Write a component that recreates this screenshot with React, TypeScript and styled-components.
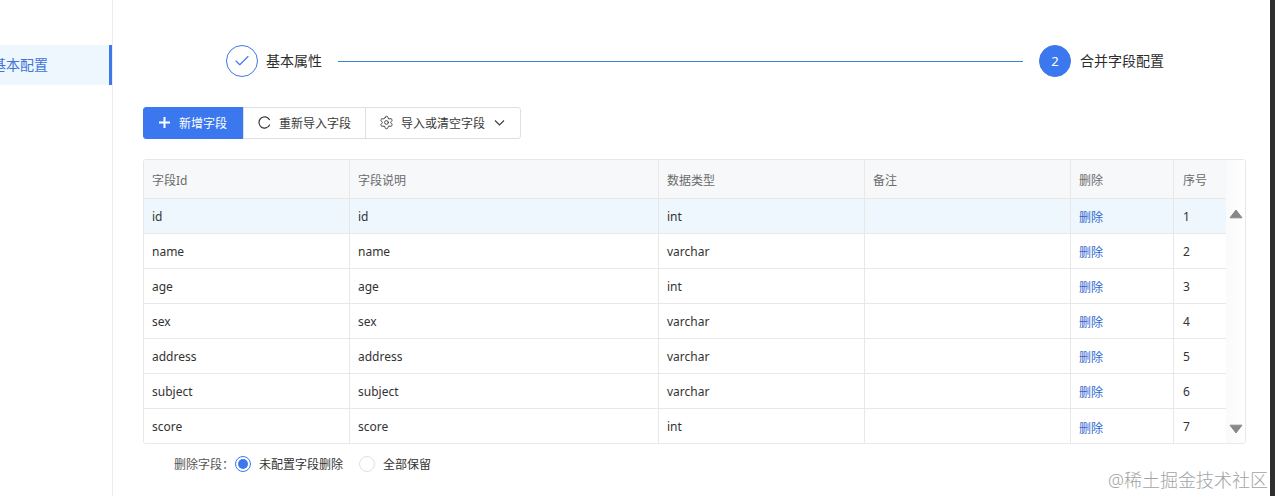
import React from "react";
import styled, { createGlobalStyle } from "styled-components";
import { Check, Settings } from "lucide-react";

const GlobalStyle = createGlobalStyle`
  html, body {
    margin: 0;
    padding: 0;
    background: #fff;
  }
  body {
    font-family: "Noto Sans", "Noto Sans CJK SC", sans-serif;
    font-size: 12px;
    color: #333;
  }
`;

// Page frame
const Page = styled.div`
  position: relative;
  display: flex;
  width: 1275px;
  height: 496px;
  overflow: hidden;
`;

const Sidebar = styled.aside`
  flex: none;
  width: 113px;
  padding-top: 45px;
  box-sizing: border-box;
  border-right: 1px solid #ececec;
  overflow: hidden;
`;

const MenuItem = styled.div`
  display: flex;
  justify-content: flex-end;
  align-items: center;
  height: 40px;
  padding: 0 61px 2px 0;
  box-sizing: border-box;
  background: #eef6fe;
  border-right: 3px solid #3f78e6;
  color: #3d75d8;
  font-size: 14px;
  white-space: nowrap;
`;

const Main = styled.main`
  flex: none;
  width: 1103px;
  padding: 45px 0 0 30px;
`;

const RightEdge = styled.div`
  flex: none;
  width: 5px;
  margin-left: auto;
  background: #2f2f2f;
`;

// Steps
const Steps = styled.div`
  display: flex;
  align-items: center;
  height: 32px;
  padding: 0 82px 0 83px;
`;

const Circle = styled.div<{ $done?: boolean }>`
  flex: none;
  display: flex;
  align-items: center;
  justify-content: center;
  box-sizing: border-box;
  width: 32px;
  height: 32px;
  border-radius: 50%;
  border: 1px solid #3f78e6;
  background: ${(p) => (p.$done ? "#fff" : "#3b78ef")};
  color: ${(p) => (p.$done ? "#3f78e6" : "#fff")};
  font-size: 13px;
`;

const StepLabel = styled.span<{ $gap: number }>`
  flex: none;
  margin: 0 0 2px ${(p) => p.$gap}px;
  font-size: 14px;
  color: #2c2c2c;
`;

const StepLine = styled.div`
  flex: 1;
  height: 1px;
  margin: 0 16px;
  background: #3a82d0;
`;

// Toolbar
const Toolbar = styled.div`
  display: flex;
  height: 32px;
  margin-top: 30px;
`;

const ToolButton = styled.button<{ $primary?: boolean; $width: number }>`
  display: flex;
  align-items: center;
  justify-content: center;
  gap: 8px;
  box-sizing: border-box;
  width: ${(p) => p.$width}px;
  height: 32px;
  padding: ${(p) => (p.$primary ? "0 2px 1px 0" : "0 0 1px")};
  margin-left: -1px;
  border: 1px solid ${(p) => (p.$primary ? "#3b78ef" : "#dcdfe6")};
  background: ${(p) => (p.$primary ? "#3b78ef" : "#fff")};
  color: ${(p) => (p.$primary ? "#fff" : "#3a3a3a")};
  font-family: inherit;
  font-size: 12px;

  &:first-child {
    margin-left: 0;
    border-radius: 3px 0 0 3px;
  }
  &:last-child {
    border-radius: 0 3px 3px 0;
  }
`;

const GearIcon = styled(Settings)`
  margin: 0 -1px;
  color: #2f2f2f;
`;

// Table
const TableFrame = styled.div`
  display: flex;
  width: 1103px;
  height: 285px;
  box-sizing: border-box;
  margin-top: 20px;
  border: 1px solid #e8e8e8;
  border-radius: 3px;
  overflow: hidden;
`;

const Grid = styled.div`
  flex: none;
  width: 1082px;
`;

const Row = styled.div<{ $head?: boolean; $active?: boolean }>`
  display: grid;
  grid-template-columns: 206px 309px 206px 206px 103px 52px;
  height: ${(p) => (p.$head ? 39 : 35)}px;
  box-sizing: border-box;
  border-bottom: 1px solid #e8e8e8;
  background: ${(p) => (p.$head ? "#f7f8fa" : p.$active ? "#eef6fe" : "#fff")};
  color: ${(p) => (p.$head ? "#6b6b6b" : "#333")};

  &:last-child {
    border-bottom: 0;
  }
`;

const Cell = styled.div<{ $head?: boolean }>`
  display: flex;
  align-items: center;
  box-sizing: border-box;
  padding-left: 8px;
  padding-top: ${(p) => (p.$head ? 1 : 0)}px;
  border-right: 1px solid #e8e8e8;
  font-size: 12px;
  white-space: nowrap;

  &:last-child {
    border-right: 0;
    padding-left: 9px;
  }
`;

const DeleteLink = styled.a`
  padding-top: 2px;
  color: #2f66d0;
`;

const ScrollTrack = styled.div`
  flex: 1;
  display: flex;
  flex-direction: column;
  justify-content: space-between;
  align-items: center;
  padding: 49px 0 9px;
  background: linear-gradient(to right, #fafafa, #fff);
`;

// Radio row
const RadioRow = styled.div`
  display: flex;
  align-items: center;
  height: 18px;
  margin: 11px 0 0 31px;
  font-size: 12px;
  color: #333;
`;

const RadioTitle = styled.span`
  margin-right: 1px;
  color: #555;
`;

const RadioDot = styled.span<{ $checked?: boolean }>`
  flex: none;
  display: flex;
  align-items: center;
  justify-content: center;
  box-sizing: border-box;
  width: 16px;
  height: 16px;
  border-radius: 50%;
  border: 1px solid ${(p) => (p.$checked ? "#3b78ef" : "#dcdfe6")};
  background: #fff;

  &::after {
    content: "";
    display: ${(p) => (p.$checked ? "block" : "none")};
    width: 10px;
    height: 10px;
    border-radius: 50%;
    background: #3b78ef;
  }
`;

const RadioLabel = styled.span<{ $gap: number }>`
  margin-left: 8px;
  margin-right: ${(p) => p.$gap}px;
`;

const Watermark = styled.div`
  position: absolute;
  right: 7px;
  top: 469px;
  font-size: 18px;
  line-height: 22px;
  font-weight: 300;
  color: #a3a3a3;
  white-space: nowrap;
`;

const columns = ["字段Id", "字段说明", "数据类型", "备注", "删除", "序号"];

const fields = [
  { name: "id", type: "int" },
  { name: "name", type: "varchar" },
  { name: "age", type: "int" },
  { name: "sex", type: "varchar" },
  { name: "address", type: "varchar" },
  { name: "subject", type: "varchar" },
  { name: "score", type: "int" },
];

const Arrow = ({ down }: { down?: boolean }) => (
  <svg width="14" height="10" viewBox="0 0 14 10">
    <path
      d={down ? "M1 1.2h12L7 9z" : "M1 8.8h12L7 1z"}
      fill="#888"
      stroke="#888"
      strokeLinejoin="round"
    />
  </svg>
);

const PlusIcon = () => (
  <svg width="13" height="13" viewBox="0 0 13 13">
    <path d="M6.5 1v11M1 6.5h11" stroke="#fff" strokeWidth="2" />
  </svg>
);

// open ring, the gap sits on the right
const ReloadIcon = () => (
  <svg width="13" height="13" viewBox="0 0 13 13" fill="none">
    <path
      d="M11.4 3.6A5.6 5.6 0 1 0 11.6 9"
      stroke="#3a3a3a"
      strokeWidth="1.2"
      strokeLinecap="round"
    />
  </svg>
);

const CaretIcon = () => (
  <svg width="13" height="13" viewBox="0 0 13 13" fill="none">
    <path d="M2 4.5l4.5 4.5L11 4.5" stroke="#3a3a3a" strokeWidth="1.1" />
  </svg>
);

const App: React.FC = () => {
  return (
    <Page>
      <GlobalStyle />
      <Sidebar>
        <MenuItem>基本配置</MenuItem>
      </Sidebar>
      <Main>
        <Steps>
          <Circle $done>
            <Check size={18} strokeWidth={1.5} />
          </Circle>
          <StepLabel $gap={8}>基本属性</StepLabel>
          <StepLine />
          <Circle>2</Circle>
          <StepLabel $gap={9}>合并字段配置</StepLabel>
        </Steps>
        <Toolbar>
          <ToolButton $primary $width={101}>
            <PlusIcon />
            新增字段
          </ToolButton>
          <ToolButton $width={123}>
            <ReloadIcon />
            重新导入字段
          </ToolButton>
          <ToolButton $width={156}>
            <GearIcon size={15} strokeWidth={1.4} />
            导入或清空字段
            <CaretIcon />
          </ToolButton>
        </Toolbar>
        <TableFrame>
          <Grid>
            <Row $head>
              {columns.map((c) => (
                <Cell key={c} $head>
                  {c}
                </Cell>
              ))}
            </Row>
            {fields.map((f, i) => (
              <Row key={f.name} $active={i === 0}>
                <Cell>{f.name}</Cell>
                <Cell>{f.name}</Cell>
                <Cell>{f.type}</Cell>
                <Cell />
                <Cell>
                  <DeleteLink>删除</DeleteLink>
                </Cell>
                <Cell>{i + 1}</Cell>
              </Row>
            ))}
          </Grid>
          <ScrollTrack>
            <Arrow />
            <Arrow down />
          </ScrollTrack>
        </TableFrame>
        <RadioRow>
          <RadioTitle>删除字段：</RadioTitle>
          <RadioDot $checked />
          <RadioLabel $gap={16}>未配置字段删除</RadioLabel>
          <RadioDot />
          <RadioLabel $gap={0}>全部保留</RadioLabel>
        </RadioRow>
      </Main>
      <RightEdge />
      <Watermark>@稀土掘金技术社区</Watermark>
    </Page>
  );
};

export default App;
